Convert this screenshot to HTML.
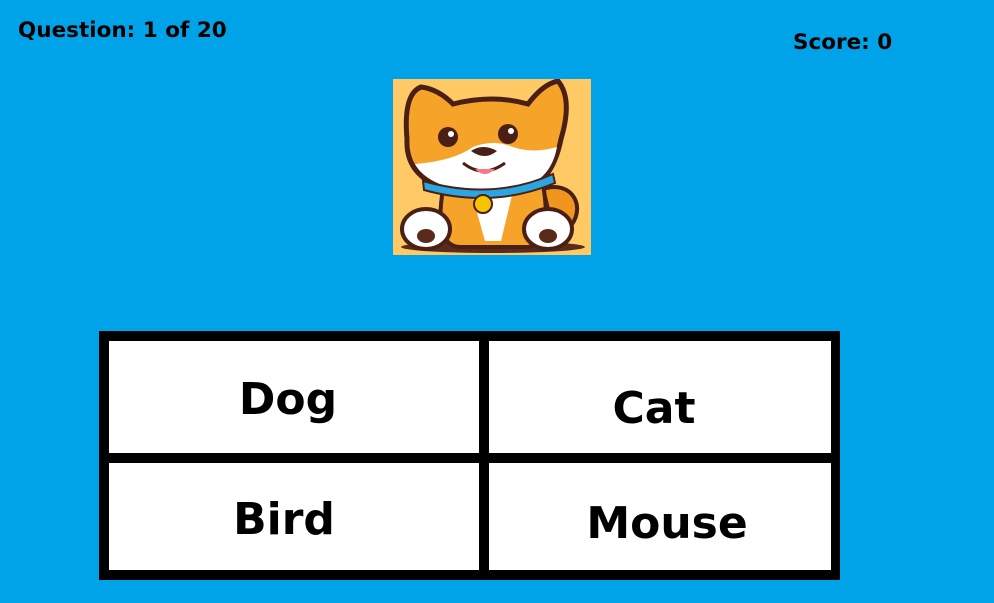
<!DOCTYPE html>
<html><head><style>
html,body{margin:0;padding:0;}
body{width:994px;height:603px;background:#00a2e8;position:relative;overflow:hidden;font-family:"DejaVu Sans","Liberation Sans",sans-serif;font-weight:bold;color:#000;}
.t{position:absolute;white-space:nowrap;line-height:1;}
.b{position:absolute;background:#000;}
.c{position:absolute;background:#fff;}
.w{position:absolute;font-size:44px;line-height:1;white-space:nowrap;transform:translateX(-50%);}
</style></head><body>
<div class="t" style="left:18px;top:20px;font-size:21.5px;">Question: 1 of 20</div>
<div class="t" style="left:793px;top:32px;font-size:21.5px;">Score: 0</div>

<svg style="position:absolute;left:393px;top:79px" width="198" height="176" viewBox="0 0 198 176">
<rect width="198" height="176" fill="#ffc966"/>
<ellipse cx="100" cy="168" rx="92" ry="6" fill="#5a2a1a"/>
<path d="M150 110 C180 100 195 130 175 150 L160 150 Z" fill="#f0961e" stroke="#4a2016" stroke-width="4"/>
<path d="M50 110 Q40 170 70 168 L135 168 Q160 165 150 105 Z" fill="#f6a32a" stroke="#4a2016" stroke-width="4"/>
<path d="M78 112 L120 112 L108 162 L92 162 Z" fill="#fff"/>
<path d="M14 60 Q10 15 28 8 Q45 10 60 25 Q100 15 135 25 Q150 5 165 2 Q180 20 168 60 Q160 100 135 110 Q100 122 60 112 Q12 100 14 60 Z" fill="#f6a32a" stroke="#4a2016" stroke-width="5"/>
<path d="M22 85 Q60 82 80 68 Q100 60 120 68 Q140 75 164 68 Q158 100 130 108 Q95 118 55 108 Q30 100 22 85 Z" fill="#fff"/>
<path d="M30 102 Q100 122 160 95 L162 104 Q100 130 31 111 Z" fill="#2aa6e0" stroke="#4a2016" stroke-width="2"/>
<circle cx="90" cy="125" r="9" fill="#f5c400" stroke="#4a2016" stroke-width="2"/>
<circle cx="55" cy="58" r="10" fill="#4a2016"/><circle cx="115" cy="55" r="10" fill="#4a2016"/>
<circle cx="58" cy="55" r="3" fill="#fff"/><circle cx="118" cy="52" r="3" fill="#fff"/>
<path d="M78 72 Q90 64 104 72 Q92 82 78 72Z" fill="#4a2016"/>
<path d="M70 84 Q90 100 112 84" fill="none" stroke="#4a2016" stroke-width="3"/>
<path d="M82 90 Q92 100 102 90Z" fill="#f47a8a"/>
<ellipse cx="33" cy="150" rx="24" ry="20" fill="#fff" stroke="#4a2016" stroke-width="4"/>
<ellipse cx="155" cy="150" rx="24" ry="20" fill="#fff" stroke="#4a2016" stroke-width="4"/>
<ellipse cx="33" cy="157" rx="9" ry="7" fill="#5a2a1a"/><ellipse cx="155" cy="157" rx="9" ry="7" fill="#5a2a1a"/>
</svg>

<div class="b" style="left:99px;top:331px;width:741px;height:249px;"></div>
<div class="c" style="left:109px;top:341px;width:370px;height:112px;"></div>
<div class="c" style="left:489px;top:341px;width:342px;height:112px;"></div>
<div class="c" style="left:109px;top:463px;width:370px;height:107px;"></div>
<div class="c" style="left:489px;top:463px;width:342px;height:107px;"></div>
<div class="w" style="left:288px;top:378px;">Dog</div>
<div class="w" style="left:654px;top:387px;">Cat</div>
<div class="w" style="left:284px;top:498px;">Bird</div>
<div class="w" style="left:667px;top:502px;">Mouse</div>
</body></html>
